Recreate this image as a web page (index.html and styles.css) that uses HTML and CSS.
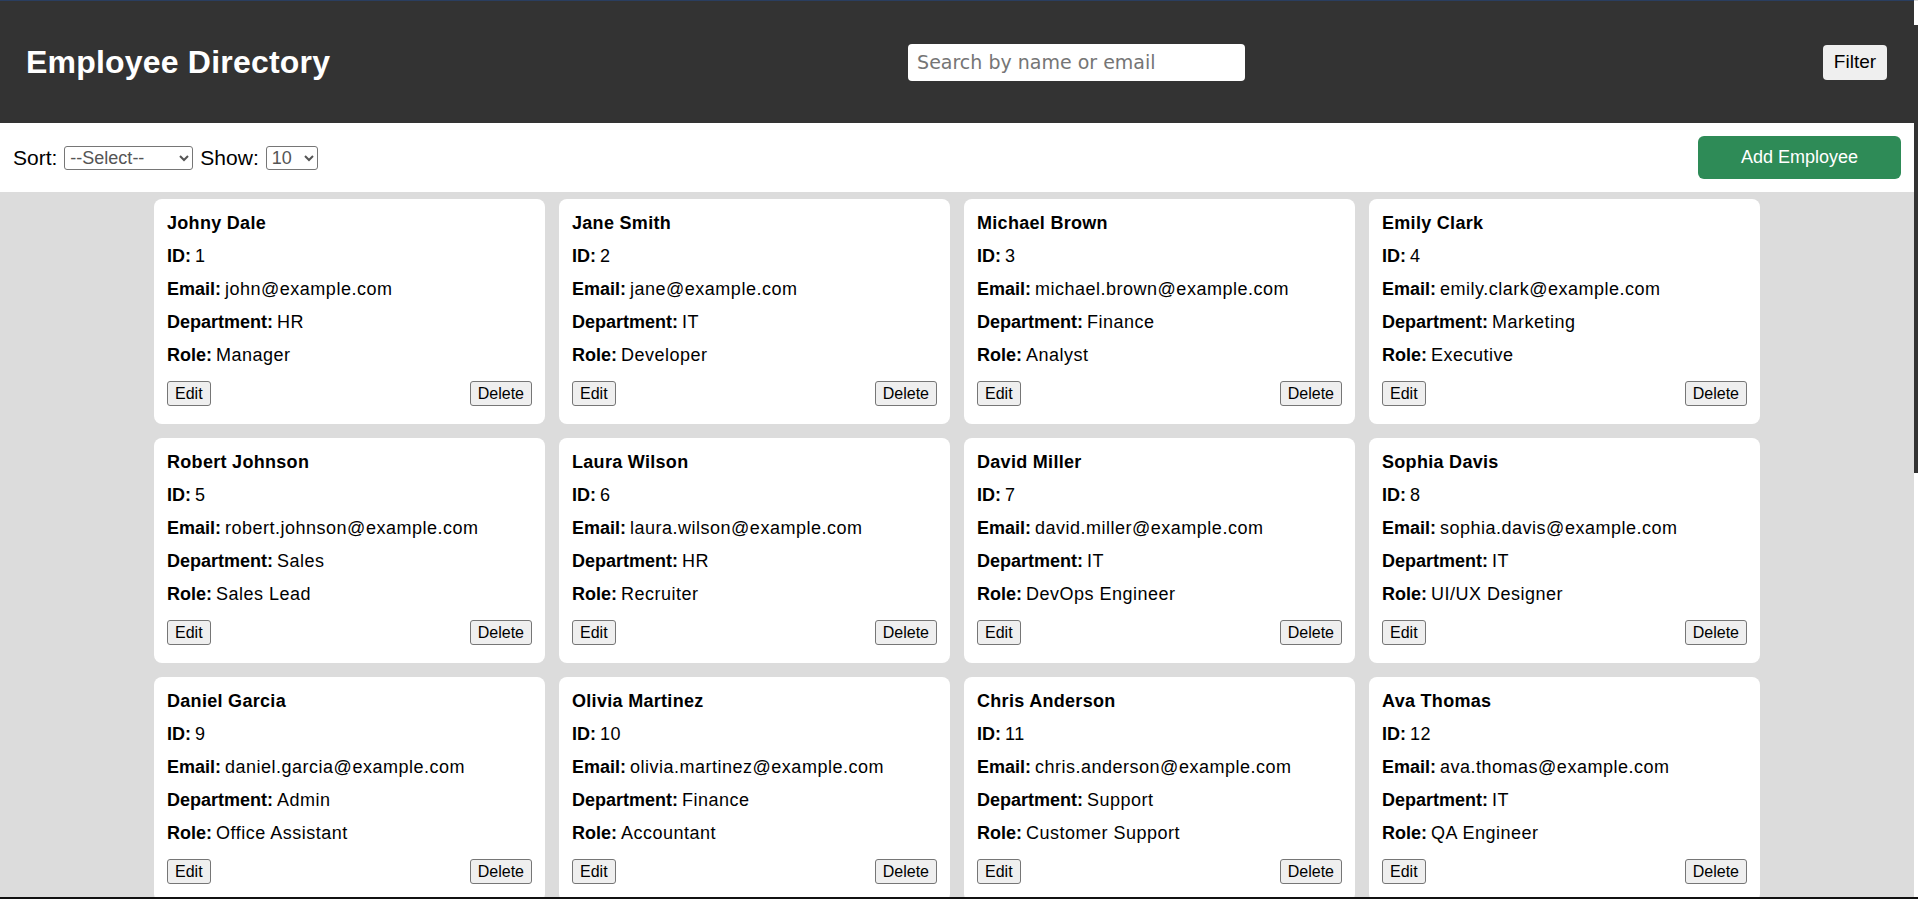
FILE: index.html
```html
<!DOCTYPE html>
<html lang="en">
<head>
<meta charset="utf-8">
<title>Employee Directory</title>
<link rel="stylesheet" href="styles.css">
</head>
<body>
<header class="topbar">
  <h1 class="title">Employee Directory</h1>
  <input class="search" type="text" placeholder="Search by name or email">
  <button class="filter-btn">Filter</button>
</header>
<div class="controls">
  <div class="controls-left">
    <label class="ctl-label">Sort:</label>
    <select class="ctl-select sort-select">
      <option>--Select--</option>
      <option>Name</option>
      <option>Department</option>
    </select>
    <label class="ctl-label">Show:</label>
    <select class="ctl-select show-select">
      <option>10</option>
      <option>25</option>
      <option>50</option>
    </select>
  </div>
  <button class="add-btn">Add Employee</button>
</div>
<main class="grid">
  <div class="card"><div class="name">Johny Dale</div><div class="field"><b>ID:</b> <span class="val">1</span></div><div class="field"><b>Email:</b> <span class="val">john@example.com</span></div><div class="field"><b>Department:</b> <span class="val">HR</span></div><div class="field"><b>Role:</b> <span class="val">Manager</span></div><div class="actions"><button class="btn-sm">Edit</button><button class="btn-sm">Delete</button></div></div>
  <div class="card"><div class="name">Jane Smith</div><div class="field"><b>ID:</b> <span class="val">2</span></div><div class="field"><b>Email:</b> <span class="val">jane@example.com</span></div><div class="field"><b>Department:</b> <span class="val">IT</span></div><div class="field"><b>Role:</b> <span class="val">Developer</span></div><div class="actions"><button class="btn-sm">Edit</button><button class="btn-sm">Delete</button></div></div>
  <div class="card"><div class="name">Michael Brown</div><div class="field"><b>ID:</b> <span class="val">3</span></div><div class="field"><b>Email:</b> <span class="val">michael.brown@example.com</span></div><div class="field"><b>Department:</b> <span class="val">Finance</span></div><div class="field"><b>Role:</b> <span class="val">Analyst</span></div><div class="actions"><button class="btn-sm">Edit</button><button class="btn-sm">Delete</button></div></div>
  <div class="card"><div class="name">Emily Clark</div><div class="field"><b>ID:</b> <span class="val">4</span></div><div class="field"><b>Email:</b> <span class="val">emily.clark@example.com</span></div><div class="field"><b>Department:</b> <span class="val">Marketing</span></div><div class="field"><b>Role:</b> <span class="val">Executive</span></div><div class="actions"><button class="btn-sm">Edit</button><button class="btn-sm">Delete</button></div></div>
  <div class="card"><div class="name">Robert Johnson</div><div class="field"><b>ID:</b> <span class="val">5</span></div><div class="field"><b>Email:</b> <span class="val">robert.johnson@example.com</span></div><div class="field"><b>Department:</b> <span class="val">Sales</span></div><div class="field"><b>Role:</b> <span class="val">Sales Lead</span></div><div class="actions"><button class="btn-sm">Edit</button><button class="btn-sm">Delete</button></div></div>
  <div class="card"><div class="name">Laura Wilson</div><div class="field"><b>ID:</b> <span class="val">6</span></div><div class="field"><b>Email:</b> <span class="val">laura.wilson@example.com</span></div><div class="field"><b>Department:</b> <span class="val">HR</span></div><div class="field"><b>Role:</b> <span class="val">Recruiter</span></div><div class="actions"><button class="btn-sm">Edit</button><button class="btn-sm">Delete</button></div></div>
  <div class="card"><div class="name">David Miller</div><div class="field"><b>ID:</b> <span class="val">7</span></div><div class="field"><b>Email:</b> <span class="val">david.miller@example.com</span></div><div class="field"><b>Department:</b> <span class="val">IT</span></div><div class="field"><b>Role:</b> <span class="val">DevOps Engineer</span></div><div class="actions"><button class="btn-sm">Edit</button><button class="btn-sm">Delete</button></div></div>
  <div class="card"><div class="name">Sophia Davis</div><div class="field"><b>ID:</b> <span class="val">8</span></div><div class="field"><b>Email:</b> <span class="val">sophia.davis@example.com</span></div><div class="field"><b>Department:</b> <span class="val">IT</span></div><div class="field"><b>Role:</b> <span class="val">UI/UX Designer</span></div><div class="actions"><button class="btn-sm">Edit</button><button class="btn-sm">Delete</button></div></div>
  <div class="card"><div class="name">Daniel Garcia</div><div class="field"><b>ID:</b> <span class="val">9</span></div><div class="field"><b>Email:</b> <span class="val">daniel.garcia@example.com</span></div><div class="field"><b>Department:</b> <span class="val">Admin</span></div><div class="field"><b>Role:</b> <span class="val">Office Assistant</span></div><div class="actions"><button class="btn-sm">Edit</button><button class="btn-sm">Delete</button></div></div>
  <div class="card"><div class="name">Olivia Martinez</div><div class="field"><b>ID:</b> <span class="val">10</span></div><div class="field"><b>Email:</b> <span class="val">olivia.martinez@example.com</span></div><div class="field"><b>Department:</b> <span class="val">Finance</span></div><div class="field"><b>Role:</b> <span class="val">Accountant</span></div><div class="actions"><button class="btn-sm">Edit</button><button class="btn-sm">Delete</button></div></div>
  <div class="card"><div class="name">Chris Anderson</div><div class="field"><b>ID:</b> <span class="val">11</span></div><div class="field"><b>Email:</b> <span class="val">chris.anderson@example.com</span></div><div class="field"><b>Department:</b> <span class="val">Support</span></div><div class="field"><b>Role:</b> <span class="val">Customer Support</span></div><div class="actions"><button class="btn-sm">Edit</button><button class="btn-sm">Delete</button></div></div>
  <div class="card"><div class="name">Ava Thomas</div><div class="field"><b>ID:</b> <span class="val">12</span></div><div class="field"><b>Email:</b> <span class="val">ava.thomas@example.com</span></div><div class="field"><b>Department:</b> <span class="val">IT</span></div><div class="field"><b>Role:</b> <span class="val">QA Engineer</span></div><div class="actions"><button class="btn-sm">Edit</button><button class="btn-sm">Delete</button></div></div>
</main>
<div class="scrollbar"><div class="scrollbar-thumb"></div></div>
<div class="window-edge"></div>
</body>
</html>
```

FILE: styles.css
```css
html, body {
  margin: 0;
  padding: 0;
}

html {
  overflow: hidden;
}

body {
  margin-right: 4px;
  font-family: "Liberation Sans", Arial, sans-serif;
  background: #dcdcdc;
  color: #000;
}

.topbar {
  box-sizing: border-box;
  height: 123px;
  display: flex;
  align-items: center;
  justify-content: space-between;
  padding: 0 27px 0 26px;
  background: #333333;
  border-top: 1px solid #2a3e60;
}

.title {
  margin: 0;
  color: #ffffff;
  font-size: 32px;
  font-weight: bold;
  line-height: 37px;
  letter-spacing: 0.2px;
}

.search {
  box-sizing: border-box;
  width: 337px;
  height: 37px;
  border: none;
  border-radius: 4px;
  padding: 0 9px;
  font-family: "DejaVu Sans", Verdana, sans-serif;
  font-size: 19px;
  color: #000;
  background: #ffffff;
  outline: none;
}

.search::placeholder {
  color: #757575;
}

.filter-btn {
  box-sizing: border-box;
  width: 64px;
  height: 35px;
  border: none;
  border-radius: 4px;
  padding: 0;
  background: #efefef;
  color: #000;
  font-family: "Liberation Sans", Arial, sans-serif;
  font-size: 19px;
}

.controls {
  box-sizing: border-box;
  height: 69px;
  display: flex;
  align-items: center;
  justify-content: space-between;
  padding: 0 13px;
  background: #ffffff;
}

.controls-left {
  display: flex;
  align-items: center;
  gap: 7px;
}

.ctl-label {
  font-size: 21px;
}

.ctl-select {
  box-sizing: border-box;
  height: 24px;
  border: 1px solid #767676;
  border-radius: 3px;
  background: #ffffff;
  color: #555555;
  font-family: "Liberation Sans", Arial, sans-serif;
  font-size: 18px;
  padding: 0 1px;
}

.sort-select {
  width: 129px;
}

.show-select {
  width: 52px;
}

.add-btn {
  box-sizing: border-box;
  width: 203px;
  height: 43px;
  border: none;
  border-radius: 6px;
  background: #2e8b57;
  color: #ffffff;
  font-family: "Liberation Sans", Arial, sans-serif;
  font-size: 18px;
  padding: 0;
}

.grid {
  display: grid;
  grid-template-columns: repeat(4, 391px);
  gap: 14px;
  justify-content: center;
  padding: 7px 0 20px;
}

.card {
  background: #ffffff;
  border-radius: 8px;
  padding: 8px 13px 18px;
}

.name {
  font-size: 18px;
  font-weight: bold;
  line-height: 33px;
  letter-spacing: 0.3px;
}

.field {
  font-size: 18px;
  line-height: 33px;
}

.field b {
  margin-right: -1px;
}

.val {
  letter-spacing: 0.5px;
}

.actions {
  display: flex;
  justify-content: space-between;
  margin-top: 9px;
}

.btn-sm {
  box-sizing: border-box;
  height: 25px;
  padding: 0 7px;
  border: 1px solid #767676;
  border-radius: 3px;
  background: #efefef;
  color: #000;
  font-family: "Liberation Sans", Arial, sans-serif;
  font-size: 16px;
  line-height: 21px;
}

.scrollbar {
  position: fixed;
  top: 1px;
  right: 0;
  bottom: 0;
  width: 4px;
  background: #ffffff;
}

.scrollbar-thumb {
  margin-top: 24px;
  height: 448px;
  background: #333333;
}

.window-edge {
  position: fixed;
  left: 0;
  right: 0;
  bottom: 0;
  height: 2px;
  background: #111111;
}
```
